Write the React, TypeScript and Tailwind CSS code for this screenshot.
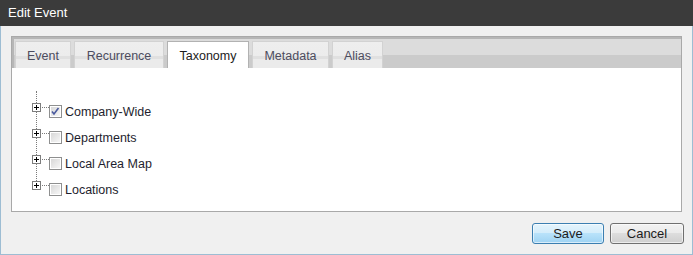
import React from 'react';

const tabs = ['Event', 'Recurrence', 'Taxonomy', 'Metadata', 'Alias'];
const tabWidths: Record<string, string> = {
  Event: 'w-[56px]',
  Recurrence: 'w-[90px]',
  Taxonomy: 'w-[82px]',
  Metadata: 'w-[77px]',
  Alias: 'w-[51px]',
};

const nodes = [
  { label: 'Company-Wide', checked: true },
  { label: 'Departments', checked: false },
  { label: 'Local Area Map', checked: false },
  { label: 'Locations', checked: false },
];

function PlusBox() {
  return (
    <svg width="9" height="9" viewBox="0 0 9 9" className="block">
      <rect x="0.5" y="0.5" width="8" height="8" fill="#fff" stroke="#7d7d7d" />
      <path d="M2 4.5h5M4.5 2v5" stroke="#000" strokeWidth="1" />
    </svg>
  );
}

function CheckBox({ checked }: { checked: boolean }) {
  return (
    <svg width="13" height="13" viewBox="0 0 13 13" className="block">
      <defs>
        <linearGradient id="cbg" x1="0" y1="0" x2="1" y2="1">
          <stop offset="0" stopColor="#d8d8d8" />
          <stop offset="1" stopColor="#f6f6f6" />
        </linearGradient>
      </defs>
      <rect x="0.5" y="0.5" width="12" height="12" fill="#fff" stroke="#8e8f8f" />
      <rect x="2" y="2" width="9" height="9" fill="url(#cbg)" />
      {checked && <path d="M3 6.5l2 2.5 4.5-6" fill="none" stroke="#4a5a9e" strokeWidth="1.6" />}
    </svg>
  );
}

export default function App() {
  return (
    <div className="w-[693px] h-[255px] flex flex-col font-['Liberation_Sans',Arial,sans-serif]">
      <div className="h-[26px] shrink-0 bg-[#3b3b3b] text-white text-[13px] pl-[8px] flex items-center">Edit Event</div>
      <div className="flex-1 bg-[#f0f0f0] border-x border-b border-[#9dbdd3] pl-[10px] pr-[10px] pt-[10px]">
        <div className="h-[176px] border border-[#a9a9a9] flex flex-col bg-white">
          <div className="h-[31px] shrink-0 flex gap-[3px] pl-[1px] pt-[4px] bg-[linear-gradient(#b6b6b6_0,#b6b6b6_2px,#dcdcdc_2px,#dcdcdc_18px,#cbcbcb_18px)] border-l-[2px] border-[#b6b6b6]">
            {tabs.map((t) =>
              t === 'Taxonomy' ? (
                <div key={t} className={`${tabWidths[t]} h-[28px] pt-[2px] bg-white border border-b-0 border-[#b2b2b2] flex items-center justify-center text-[12.5px] text-[#1c1c1c]`}>
                  {t}
                </div>
              ) : (
                <div key={t} className={`${tabWidths[t]} h-[27px] pt-[2px] border border-b-0 border-[#d2d2d2] bg-[linear-gradient(#eeeeee_0,#ececec_14px,#e0e0e0_14px,#e0e0e0_17px,#ebebeb_17px)] flex items-center justify-center text-[12.5px] text-[#4c4c5e]`}>
                  {t}
                </div>
              )
            )}
          </div>
          <div className="flex-1 bg-white pl-[20px] pt-[30px]">
            <div className="relative">
              <div className="absolute left-[4px] top-[-7px] h-[90px] border-l border-dotted border-[#7a7a7a]" />
              {nodes.map((n) => (
                <div key={n.label} className="relative h-[26px] flex items-start">
                  <div className="mt-[5px] relative z-10">
                    <PlusBox />
                  </div>
                  <div className="mt-[9px] w-[7px] border-t border-dotted border-[#7a7a7a] ml-px" />
                  <div className="mt-[7px]">
                    <CheckBox checked={n.checked} />
                  </div>
                  <span className="ml-[3px] mt-[6px] text-[12.5px] leading-[16px] text-[#1e1e2e]">{n.label}</span>
                </div>
              ))}
            </div>
          </div>
        </div>
        <div className="flex justify-end gap-[6px] mt-[11px] -mr-[2px]">
          <button className="w-[72px] h-[21px] rounded-[3px] border border-[#3c7fb1] bg-[linear-gradient(#e5f4fc_0%,#d4edfb_45%,#b8e2fa_50%,#9fd3f3_100%)] text-[13px] text-[#1c1c1c] shadow-[inset_0_0_0_1px_rgba(255,255,255,0.6)]">
            Save
          </button>
          <button className="w-[74px] h-[21px] rounded-[3px] border border-[#707070] bg-[linear-gradient(#f2f2f2_0%,#ebebeb_45%,#dddddd_50%,#cfcfcf_100%)] text-[13px] text-[#1c1c1c] shadow-[inset_0_0_0_1px_rgba(255,255,255,0.6)]">
            Cancel
          </button>
        </div>
      </div>
    </div>
  );
}
